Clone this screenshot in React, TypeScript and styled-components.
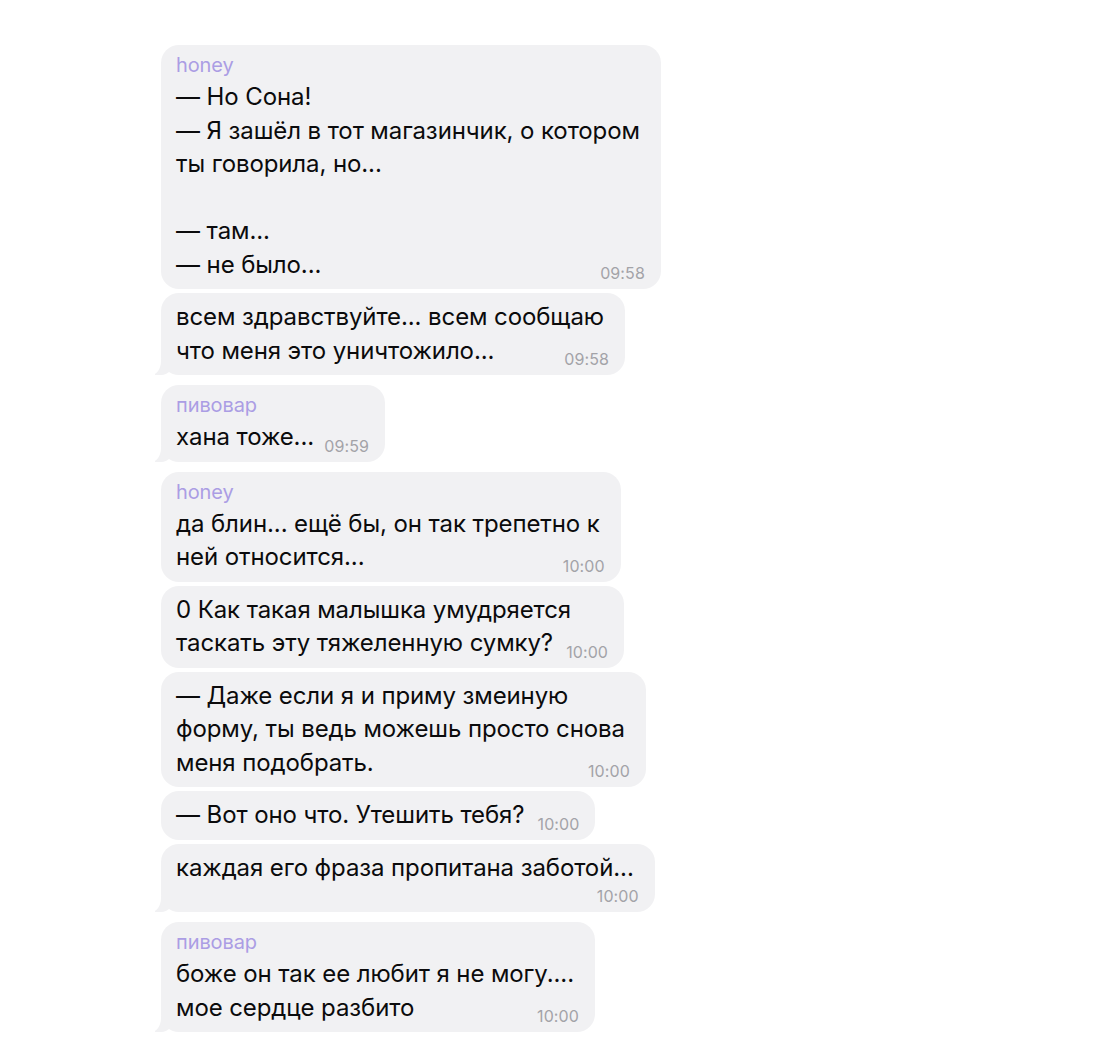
import { FC, Fragment } from 'react'
import styled, { createGlobalStyle } from 'styled-components'

type Message = {
  lines: string[]
  time: string
  timeOwnLine?: boolean
}

type Group = {
  name?: string
  messages: Message[]
}

const groups: Group[] = [
  {
    name: 'honey',
    messages: [
      {
        lines: ['— Но Сона!', '— Я зашёл в тот магазинчик, о котором', 'ты говорила, но...', '', '— там...', '— не было...'],
        time: '09:58',
      },
      { lines: ['всем здравствуйте... всем сообщаю', 'что меня это уничтожило...'], time: '09:58' },
    ],
  },
  {
    name: 'пивовар',
    messages: [{ lines: ['хана тоже...'], time: '09:59' }],
  },
  {
    name: 'honey',
    messages: [
      { lines: ['да блин... ещё бы, он так трепетно к', 'ней относится...'], time: '10:00' },
      { lines: ['0 Как такая малышка умудряется', 'таскать эту тяжеленную сумку?'], time: '10:00' },
      {
        lines: ['— Даже если я и приму змеиную', 'форму, ты ведь можешь просто снова', 'меня подобрать.'],
        time: '10:00',
      },
      { lines: ['— Вот оно что. Утешить тебя?'], time: '10:00' },
      { lines: ['каждая его фраза пропитана заботой...'], time: '10:00', timeOwnLine: true },
    ],
  },
  {
    name: 'пивовар',
    messages: [{ lines: ['боже он так ее любит я не могу....', 'мое сердце разбито'], time: '10:00' }],
  },
]

const GlobalStyle = createGlobalStyle`
  body {
    margin: 0;
    background: #ffffff;
    font-family: Inter, "Noto Sans", sans-serif;
    -webkit-font-smoothing: antialiased;
  }
`

const Page = styled.div`
  display: flex;
  flex-direction: column;
  gap: 10px;
  padding: 45px 0 0 161px;
`

const MessageGroup = styled.div`
  display: flex;
  flex-direction: column;
  align-items: flex-start;
  gap: 4px;
`

const Bubble = styled.div<{ $tail: boolean }>`
  position: relative;
  background: #f1f1f3;
  border-radius: 18px;
  padding: 7px 21px 8px 15px;
  color: #0b0b0c;
  font-size: 24px;
  line-height: 33.5px;
  letter-spacing: -0.1px;
  white-space: nowrap;

  ${({ $tail }) =>
    $tail &&
    `
    &::before {
      content: '';
      position: absolute;
      left: -6px;
      bottom: 0;
      width: 20px;
      height: 16px;
      background: #f1f1f3;
      border-bottom-right-radius: 14px 16px;
    }
    &::after {
      content: '';
      position: absolute;
      left: -10px;
      bottom: 0;
      width: 10px;
      height: 18px;
      background: #ffffff;
      border-bottom-right-radius: 10px 14px;
    }
  `}
`

const Name = styled.div`
  color: #ab9de4;
  font-size: 20px;
  line-height: 26px;
  margin-bottom: 2px;
`

const Text = styled.span`
  position: relative;
  z-index: 1;
`

const Spacer = styled.span`
  display: inline-block;
  width: 50px;
  height: 10px;
`

const Time = styled.span<{ $ownLine?: boolean }>`
  z-index: 1;
  color: #a3a3a8;
  font-size: 16px;
  line-height: 18px;
  letter-spacing: 0.1px;

  ${({ $ownLine }) =>
    $ownLine
      ? `
    position: relative;
    display: block;
    text-align: right;
    margin: 3px -5px -1px 0;
  `
      : `
    position: absolute;
    right: 16px;
    bottom: 7px;
  `}
`

const App: FC = () => {
  return (
    <>
      <GlobalStyle />
      <Page>
        {groups.map((group, gi) => (
          <MessageGroup key={gi}>
            {group.messages.map((msg, mi) => (
              <Bubble key={mi} $tail={mi === group.messages.length - 1}>
                {mi === 0 && group.name && <Name>{group.name}</Name>}
                <Text>
                  {msg.lines.map((line, li) => (
                    <Fragment key={li}>
                      {li > 0 && <br />}
                      {line}
                    </Fragment>
                  ))}
                  {!msg.timeOwnLine && <Spacer />}
                </Text>
                <Time $ownLine={msg.timeOwnLine}>{msg.time}</Time>
              </Bubble>
            ))}
          </MessageGroup>
        ))}
      </Page>
    </>
  )
}

export default App
